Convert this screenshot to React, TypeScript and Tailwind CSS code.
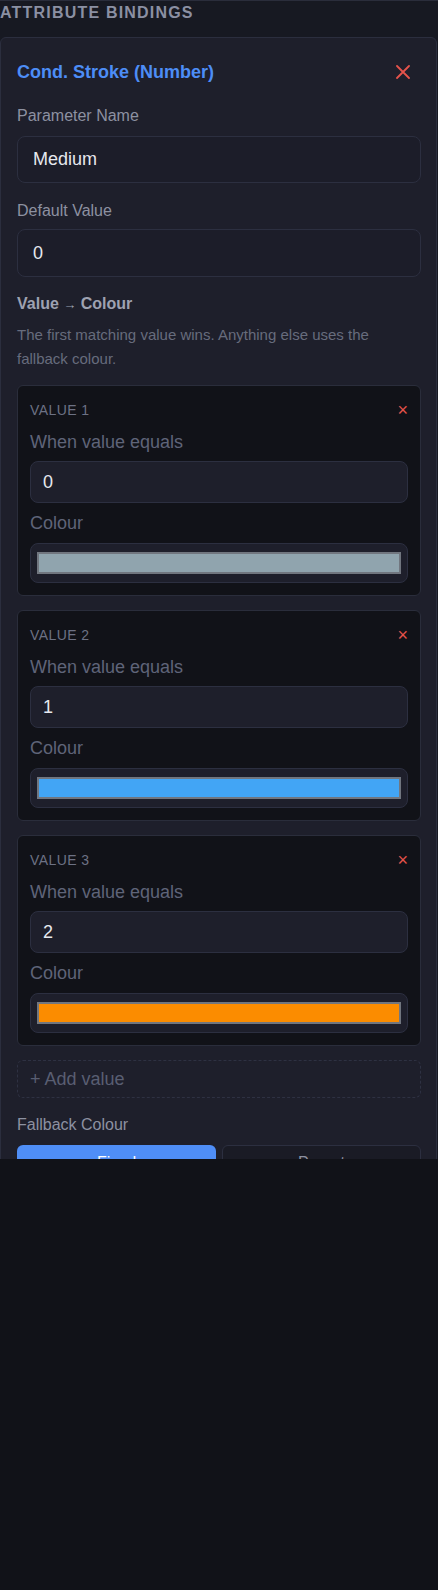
import React from "react";

interface ValueRow {
  label: string;
  value: string;
  colour: string;
}

const rows: ValueRow[] = [
  { label: "Value 1", value: "0", colour: "#90a4ae" },
  { label: "Value 2", value: "1", colour: "#42a5f5" },
  { label: "Value 3", value: "2", colour: "#fb8c00" },
];

function CloseIcon() {
  return (
    <svg width="14" height="14" viewBox="0 0 14 14" fill="none">
      <path
        d="M1 1L13 13M13 1L1 13"
        stroke="#e5534b"
        strokeWidth="1.8"
        strokeLinecap="round"
      />
    </svg>
  );
}

function ValueCard({ row }: { row: ValueRow }) {
  return (
    <div className="flex flex-col rounded-md border border-[#2a2d3b] bg-[#111218] p-3">
      <div className="flex h-[24px] items-center justify-between">
        <span className="text-[14px] uppercase leading-[24px] tracking-[0.03em] text-[#6c7184]">
          {row.label}
        </span>
        <button className="text-[18px] leading-[24px] text-[#e5534b]">×</button>
      </div>
      <label className="mt-[8px] text-[18px] leading-[24px] text-[#5f6478]">
        When value equals
      </label>
      <input
        readOnly
        value={row.value}
        className="mt-[7px] h-[42px] w-full rounded-lg border border-[#2c2f40] bg-[#1e1f2b] px-3 text-[18px] text-[#e6e8ee] outline-none"
      />
      <label className="mt-[8px] text-[18px] leading-[24px] text-[#5f6478]">
        Colour
      </label>
      <div className="mt-[8px] flex h-[40px] items-stretch rounded-lg border border-[#2c2f40] bg-[#1e1f2b] px-[6px] py-[8px]">
        <div
          className="w-full border-2 border-[#71767f]"
          style={{ backgroundColor: row.colour }}
        />
      </div>
    </div>
  );
}

export default function App() {
  return (
    <div className="min-h-[1590px] w-full bg-[#111218] font-['Liberation_Sans',Arial,sans-serif]">
      <div className="h-[1159px] overflow-hidden border-t border-[#2a2d3b] bg-[#171922]">
        <h2 className="pt-[2px] text-[16px] font-bold uppercase leading-[20px] tracking-[0.075em] text-[#8b90a3]">
          Attribute Bindings
        </h2>

        {/* binding panel */}
        <div className="mr-[1px] mt-[14px] flex flex-col rounded-md border border-[#2b2e3e] bg-[#1e1f2b] pb-6 pl-4 pr-[15px] pt-4">
          <div className="flex h-[36px] items-center justify-between">
            <h3 className="text-[18px] font-bold leading-[28px] text-[#4d8df6]">
              Cond. Stroke (Number)
            </h3>
            <button className="flex h-[32px] w-[36px] items-center justify-center">
              <CloseIcon />
            </button>
          </div>

          <label className="mt-[14px] text-[16px] leading-[24px] text-[#8d91a1]">
            Parameter Name
          </label>
          <input
            readOnly
            value="Medium"
            className="mt-[8px] h-[47px] w-full rounded-lg border border-[#2c2f40] bg-[#1c1d29] px-[15px] text-[18px] text-[#e6e8ee] outline-none"
          />

          <label className="mt-[16px] text-[16px] leading-[24px] text-[#8d91a1]">
            Default Value
          </label>
          <input
            readOnly
            value="0"
            className="mt-[6px] h-[48px] w-full rounded-lg border border-[#2c2f40] bg-[#1c1d29] px-[15px] text-[18px] text-[#e6e8ee] outline-none"
          />

          <div className="mt-[15px] text-[16px] font-bold leading-[24px] text-[#9ea2b1]">
            Value <span className="text-[13px]">→</span> Colour
          </div>
          <p className="mt-[6px] text-[15px] leading-[24px] text-[#676c7d]">
            The first matching value wins. Anything else uses the fallback
            colour.
          </p>

          <div className="mt-[14px] flex flex-col gap-[14px]">
            {rows.map((row) => (
              <ValueCard key={row.label} row={row} />
            ))}
          </div>

          <button className="mt-[14px] flex h-[38px] items-center rounded-md border border-dashed border-[#2e3142] px-3 text-left text-[18px] text-[#595e72]">
            + Add value
          </button>

          <label className="mt-[15px] text-[16px] leading-[24px] text-[#8d91a1]">
            Fallback Colour
          </label>
          <div className="mt-[8px] grid grid-cols-2 gap-[6px]">
            <button className="h-[36px] rounded-md bg-[#4f8ef7] text-[16px] text-white">
              Fixed
            </button>
            <button className="h-[36px] rounded-md border border-[#2c2f40] bg-[#1a1b25] text-[16px] text-[#8d91a1]">
              Parent
            </button>
          </div>
        </div>
      </div>
    </div>
  );
}
